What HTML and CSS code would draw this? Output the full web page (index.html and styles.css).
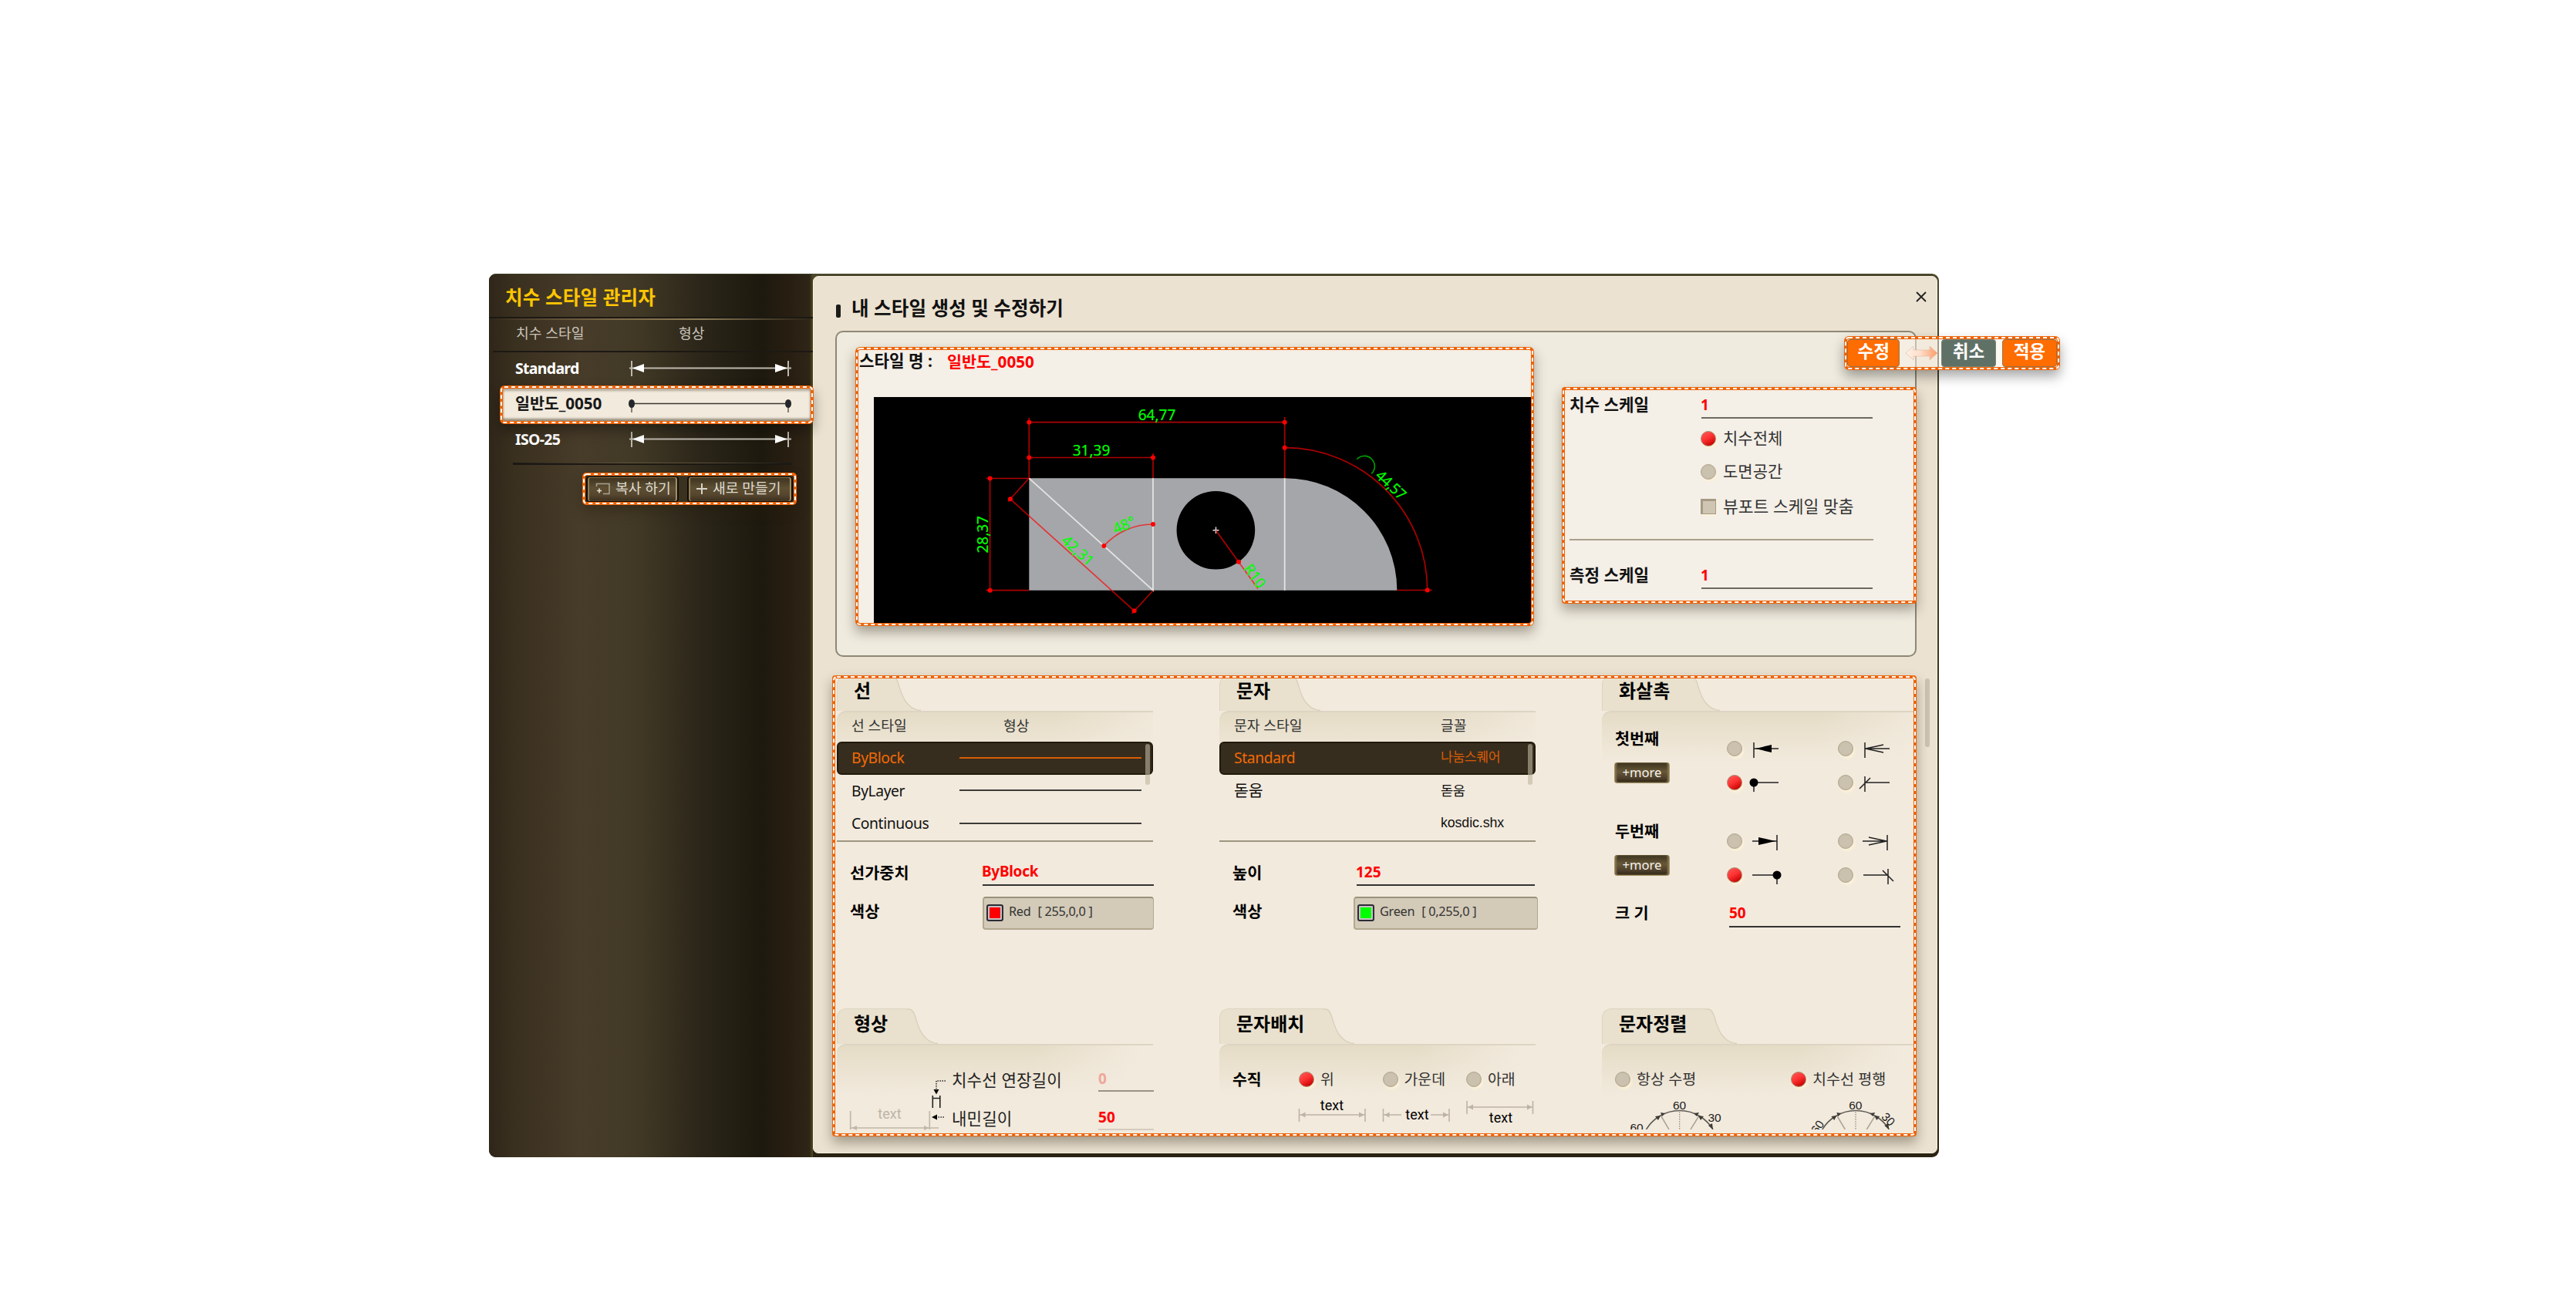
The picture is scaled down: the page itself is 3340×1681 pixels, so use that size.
FILE: index.html
```html
<!DOCTYPE html>
<html lang="ko">
<head>
<meta charset="utf-8">
<title>치수 스타일 관리자</title>
<link rel="stylesheet" href="styles.css">
</head>
<body>
<svg class="defs" width="0" height="0" aria-hidden="true">
  <defs>
    <linearGradient id="swap" x1="0" x2="1" y1="0" y2="0"><stop offset="0" stop-color="#fff0e6"/><stop offset=".45" stop-color="#ffdfcc"/><stop offset="1" stop-color="#ff9c68"/></linearGradient>
    <symbol id="dim-arrows" viewBox="0 0 212 24">
      <path d="M1 11.5H211M4 2V22M207 2V22" stroke="#bdb8ae" stroke-width="2" fill="none"/>
      <path d="M5 11.5L20 6V17ZM206 11.5L190 6V17Z" fill="#fff"/>
    </symbol>
    <symbol id="dim-dots" viewBox="0 0 212 24">
      <path d="M4 11.5H207" stroke="#3a3934" stroke-width="1.6"/>
      <path d="M4 11V23M207 11V23" stroke="#77736c" stroke-width="1.8"/>
      <ellipse cx="4" cy="11.5" rx="4" ry="5.5" fill="#23262a"/><ellipse cx="207" cy="11.5" rx="4" ry="5.5" fill="#23262a"/>
    </symbol>
    <symbol id="tab-end" viewBox="0 0 42 46">
      <path d="M0 0H6C16 3 12 22 24 36Q32 46 42 46H0Z" fill="#e9e1ce"/>
      <path d="M0 .8H5C15 3 12 22 24 36Q32 45.400 42 45.500" fill="none" stroke="#d9cfba" stroke-width="1.300"/>
    </symbol>
    <symbol id="protractor" viewBox="2110 1421 130 44">
      <path d="M2134.500 1465A50.500 50.500 0 0 1 2221 1465" fill="none" stroke="#5e5b54" stroke-width="1.600"/>
      <path d="M2154 1448L2164 1465M2202.500 1448L2192 1465" stroke="#aaa396" stroke-width="1.500"/>
      <path d="M2177.700 1442V1465" stroke="#8c877c" stroke-width="1.200" stroke-dasharray="1.500 1.500"/>
      <path d="M2153 1443L2159 1444L2155 1448ZM2146 1448L2153 1447L2150 1453ZM2203 1443L2196 1444L2200 1448ZM2209 1448L2202 1447L2205 1453ZM2221 1465L2215 1460L2220 1457Z" fill="#3d3b36"/>
    </symbol>
  </defs>
</svg>

<main class="window">
  <aside class="sidebar">
    <h1 class="sidebar-title">치수 스타일 관리자</h1>
    <div class="sidebar-head"><span>치수 스타일</span><span>형상</span></div>
    <div class="style-row"><span class="latin">Standard</span><svg class="dim"><use href="#dim-arrows"/></svg></div>
    <div class="style-row selected callout"><svg class="march"><rect/></svg><span class="sel-name">일반도_0050</span><svg class="dim"><use href="#dim-dots"/></svg></div>
    <div class="style-row"><span class="latin">ISO-25</span><svg class="dim"><use href="#dim-arrows"/></svg></div>
    <div class="sidebar-rule"></div>
    <div class="sidebar-actions callout">
      <svg class="march"><rect/></svg>
      <button class="bronze copy"><svg width="20" height="18" viewBox="0 0 20 18"><path d="M1.500 6V2.500H18V15.500H10" fill="none" stroke="#a9a294" stroke-width="1.500"/><path d="M2 11.500H8M5 8.500V14.500" stroke="#e4dfd5" stroke-width="1.600"/></svg>복사 하기</button>
      <button class="bronze create"><svg width="14" height="14" viewBox="0 0 14 14"><path d="M0 7H14M7 0V14" stroke="#d8d3c8" stroke-width="2"/></svg>새로 만들기</button>
    </div>
  </aside>

  <section class="panel">
    <header class="panel-head"><i class="bullet"></i><h2>내 스타일 생성 및 수정하기</h2>
      <svg class="close" width="14" height="14" viewBox="0 0 14 14"><path d="M1 1L13 13M13 1L1 13" stroke="#222" stroke-width="1.800"/></svg></header>

    <div class="group">
      <div class="preview callout">
        <svg class="march"><rect/></svg>
        <div class="name-row"><b>스타일 명 :</b><strong>일반도_0050</strong></div>
        <svg class="drawing" width="852" height="293" viewBox="1133 515 852 293">
          <rect x="1133" y="515" width="852" height="293" fill="#000"/>
          <path d="M1334.300 620.300H1666A145.300 145.300 0 0 1 1811.300 765.700H1334.300Z" fill="#a5a6aa"/>
          <circle cx="1576.400" cy="687.700" r="50.800" fill="#000"/>
          <path d="M1334.300 620.300L1495 765.700V620.300M1665.700 620.300V765.700" fill="none" stroke="#e4e4e4" stroke-width="1.800"/>
          <path d="M1572.500 687.700H1580.500M1576.500 683.500V692" stroke="#ddd" stroke-width="1.500"/>
          <g class="dims">
            <path d="M1334.300 542V620M1665.700 541V620M1334.300 547.700H1665.700M1334.300 593.500H1495M1495 588V620"/>
            <path d="M1283.600 620.500V765.700M1278.500 620.500H1334M1278.500 765.700H1334"/>
            <path d="M1310 647.300L1470.700 792.300M1334 620.500L1307 650.500M1495 766L1467.500 796"/>
            <path d="M1431.400 708A85.700 85.700 0 0 1 1495 680M1576.500 688L1631 763.500"/>
            <path d="M1665.700 580.700A185 185 0 0 1 1850.700 765.500M1811.300 765.500H1857"/>
          </g>
          <g fill="#f00">
            <circle cx="1334.300" cy="547.700" r="3"/><circle cx="1665.700" cy="547.700" r="3"/><circle cx="1334.300" cy="593.500" r="3"/><circle cx="1495" cy="593.500" r="3"/>
            <circle cx="1283.600" cy="620.500" r="3"/><circle cx="1283.600" cy="765.700" r="3"/><circle cx="1310" cy="647.300" r="3"/><circle cx="1470.700" cy="792.300" r="3"/>
            <circle cx="1431.400" cy="708" r="3"/><circle cx="1495" cy="680" r="3"/><circle cx="1606" cy="728.700" r="3"/><circle cx="1665.700" cy="580.700" r="3"/><circle cx="1850.700" cy="765.500" r="3"/>
          </g>
          <g class="dim-text">
            <text x="1500" y="544.700">64,77</text>
            <text x="1415" y="590.700">31,39</text>
            <text transform="translate(1281.300 693.300) rotate(-90)">28,37</text>
            <text transform="translate(1393 719) rotate(42)">42,31</text>
            <text transform="translate(1460 687) rotate(-24)">48°</text>
            <text transform="translate(1621.500 751) rotate(54)">R10</text>
            <text transform="translate(1799 634) rotate(43)" textLength="46">44,57</text>
          </g>
          <path d="M1759.300 595.700A13.300 13.300 0 1 1 1778.300 614.300" fill="none" stroke="#00a000" stroke-width="1.600"/>
        </svg>
      </div>

      <div class="scale callout">
        <svg class="march"><rect/></svg>
        <div class="scale-row"><b>치수 스케일</b><span class="value">1</span></div>
        <label class="option"><i class="radio on"></i>치수전체</label>
        <label class="option"><i class="radio"></i>도면공간</label>
        <label class="option check-row"><i class="check"></i>뷰포트 스케일 맞춤</label>
        <div class="scale-rule"></div>
        <div class="scale-row"><b>측정 스케일</b><span class="value">1</span></div>
      </div>
    </div>

    <div class="lower">
      <div class="sections callout">
        <svg class="march"><rect/></svg>
        <div class="grid">
          <article class="section">
            <h3 class="tab"><span>선</span><svg><use href="#tab-end"/></svg></h3>
            <div class="body">
              <div class="list line-list">
                <div class="list-head"><span>선 스타일</span><span>형상</span></div>
                <div class="item active"><span>ByBlock</span><i class="stroke"></i></div>
                <div class="item"><span>ByLayer</span><i class="stroke"></i></div>
                <div class="item"><span>Continuous</span><i class="stroke"></i></div>
                <i class="thumb"></i>
              </div>
              <div class="field weight"><b>선가중치</b><span class="value">ByBlock</span></div>
              <div class="field color"><b>색상</b><span class="select"><i class="swatch red"></i>Red<em>[ 255,0,0 ]</em></span></div>
            </div>
          </article>

          <article class="section">
            <h3 class="tab"><span>문자</span><svg><use href="#tab-end"/></svg></h3>
            <div class="body">
              <div class="list text-list">
                <div class="list-head"><span>문자 스타일</span><span>글꼴</span></div>
                <div class="item active"><span>Standard</span><span class="font square">나눔스퀘어</span></div>
                <div class="item"><span class="dotum">돋움</span><span class="font">돋움</span></div>
                <div class="item"><span></span><span class="font shx">kosdic.shx</span></div>
                <i class="thumb"></i>
              </div>
              <div class="field height"><b>높이</b><span class="value">125</span></div>
              <div class="field color green-field"><b>색상</b><span class="select"><i class="swatch green"></i>Green<em>[ 0,255,0 ]</em></span></div>
            </div>
          </article>

          <article class="section wide">
            <h3 class="tab"><span>화살촉</span><svg><use href="#tab-end"/></svg></h3>
            <div class="body arrows">
              <div class="arrow-set">
                <div class="arrow-name"><b>첫번째</b><button class="more">+more</button></div>
                <div class="arrow-options">
                  <label><i class="radio"></i><svg width="44" height="24" viewBox="0 0 44 24"><path d="M8 4V24M8 12H40"/><path class="solid" d="M10 12L31 7V17Z"/></svg></label>
                  <label><i class="radio"></i><svg width="44" height="24" viewBox="0 0 44 24"><path d="M8 4V24M8 12H40M32 7L9 12L32 17"/></svg></label>
                  <label><i class="radio on"></i><svg width="44" height="24" viewBox="0 0 44 24"><path d="M8 12V24M8 12H40"/><circle cx="8" cy="12" r="5.500"/></svg></label>
                  <label><i class="radio"></i><svg width="44" height="24" viewBox="0 0 44 24"><path d="M8 4V24M8 12H40M1 20L15 6"/></svg></label>
                </div>
              </div>
              <div class="arrow-set second">
                <div class="arrow-name"><b>두번째</b><button class="more">+more</button></div>
                <div class="arrow-options">
                  <label><i class="radio"></i><svg width="44" height="24" viewBox="0 0 44 24"><path d="M38 4V24M6 12H38"/><path class="solid" d="M36 12L14 7V17Z"/></svg></label>
                  <label><i class="radio"></i><svg width="44" height="24" viewBox="0 0 44 24"><path d="M37 4V24M5 12H37M13 7L36 12L13 17"/></svg></label>
                  <label><i class="radio on"></i><svg width="44" height="24" viewBox="0 0 44 24"><path d="M38 12V24M6 12H38"/><circle cx="38" cy="12" r="5.500"/></svg></label>
                  <label><i class="radio"></i><svg width="48" height="24" viewBox="0 0 48 24"><path d="M38 4V24M6 12H38M31 6L45 20"/></svg></label>
                </div>
              </div>
              <div class="field size"><b>크 기</b><span class="value">50</span></div>
            </div>
          </article>

          <article class="section">
            <h3 class="tab"><span>형상</span><svg><use href="#tab-end"/></svg></h3>
            <div class="body shape">
              <svg class="shape-art" width="150" height="88" viewBox="1085 1381 150 88">
                <g stroke="#c1b8a9" stroke-width="1.700" fill="none"><path d="M1102.700 1441V1465M1205.300 1441V1465M1103 1463H1217"/></g>
                <path d="M1104 1463L1111 1460V1466ZM1205 1463L1198 1460V1466Z" fill="#c1b8a9"/>
                <text x="1153.500" y="1451" class="art-text" fill="#bdb4a6">text</text>
                <path d="M1226 1402H1214V1412M1224 1449H1215" fill="none" stroke="#333" stroke-width="1.600" stroke-dasharray="1.600 1.400"/>
                <path d="M1210.500 1413H1217.500L1214 1419.500ZM1208 1449L1215 1445.500V1452.500Z" fill="#000"/>
                <path d="M1209.300 1421V1437M1218.800 1421V1437M1209 1424.500H1219" fill="none" stroke="#222" stroke-width="1.600"/>
              </svg>
              <span>치수선 연장길이</span><span class="value faded">0</span>
              <span>내민길이</span><span class="value light-rule">50</span>
            </div>
          </article>

          <article class="section">
            <h3 class="tab"><span>문자배치</span><svg><use href="#tab-end"/></svg></h3>
            <div class="body">
              <div class="place-row"><b>수직</b><label><i class="radio on"></i>위</label><label><i class="radio"></i>가운데</label><label><i class="radio"></i>아래</label></div>
              <svg class="place-art" width="410" height="48" viewBox="1581 1421 410 48">
                <path d="M1684.500 1438V1455M1770 1438V1455M1685 1446H1770M1793.500 1438V1455M1879 1438V1455M1794 1446H1817M1855 1446H1879M1902 1428V1445M1987.500 1428V1445M1902 1436H1987" fill="none" stroke="#bdb4a6" stroke-width="1.600"/>
                <path d="M1686 1446L1692.500 1442.500V1449.500ZM1769 1446L1762 1442.500V1449.500ZM1795 1446L1801.500 1442.500V1449.500ZM1878 1446L1871 1442.500V1449.500ZM1903.500 1436L1910 1432.500V1439.500ZM1986.500 1436L1980 1432.500V1439.500Z" fill="#bdb4a6"/>
                <g class="art-text"><text x="1727" y="1440">text</text><text x="1837.500" y="1451.500">text</text><text x="1946" y="1455.500">text</text></g>
              </svg>
            </div>
          </article>

          <article class="section wide">
            <h3 class="tab"><span>문자정렬</span><svg><use href="#tab-end"/></svg></h3>
            <div class="body">
              <div class="align-row"><label><i class="radio"></i>항상 수평</label><label><i class="radio on"></i>치수선 평행</label></div>
              <svg class="align-art" width="404" height="44" viewBox="2077 1421 404 44">
                <use href="#protractor" x="2110" y="1421" width="130" height="44"/>
                <use href="#protractor" x="2338.300" y="1421" width="130" height="44"/>
                <g class="angle-text">
                  <text x="2177.500" y="1438.500">60</text><text x="2223" y="1454.500">30</text><text x="2122" y="1468">60</text>
                  <text x="2405.800" y="1438.500">60</text><text transform="translate(2444.500 1455.500) rotate(45)">30</text><text transform="translate(2361 1465) rotate(-55)">60</text>
                </g>
              </svg>
            </div>
          </article>
        </div>
      </div>
      <i class="page-thumb"></i>
    </div>
  </section>

  <div class="edit-bar callout">
    <svg class="march"><rect/></svg>
    <button class="chip orange">수정</button>
    <svg class="swap" width="43" height="20" viewBox="0 0 43 20"><path d="M1 10L11 1V6H32V1L42 10L32 19V14H11V19Z" fill="url(#swap)" stroke="#d9b49c" stroke-width=".8" stroke-dasharray="1.500 1"/></svg>
    <button class="chip slate">취소</button>
    <button class="chip orange last">적용</button>
  </div>
</main>
</body>
</html>
```
FILE: styles.css
```css
* { box-sizing: border-box; }
body {
  margin: 0;
  width: 3340px;
  height: 1681px;
  overflow: hidden;
  background: #fff;
  color: #111;
  font-family: "Noto Sans", "Noto Sans CJK KR", sans-serif;
  font-size: 21px;
  line-height: 1.3;
}
h1, h2, h3 { margin: 0; font-weight: 700; }
i, em { font-style: normal; display: inline-block; }
b, strong { font-weight: 700; }
button { border: 0; padding: 0; font: inherit; }
svg { display: block; flex: none; }
.defs { position: absolute; }
span, b, strong, h1, h2, h3, label, button { white-space: nowrap; }

.window {
  position: relative;
  display: flex;
  width: 1880px;
  height: 1146px;
  margin: 355px 0 0 634px;
  border-radius: 9px;
  background: linear-gradient(#4b472c, #3a351b 50%, #2b2312);
}

/* dashed orange frame drawn around highlighted areas */
.callout {
  position: relative;
  border: 4px solid #ee6205;
  border-radius: 6px;
  box-shadow: 0 8px 16px rgba(40, 30, 10, .38);
}
.march { position: absolute; left: -4px; top: -4px; width: calc(100% + 8px); height: calc(100% + 8px); z-index: 3; pointer-events: none; }
.march rect { x: 2px; y: 2px; width: calc(100% - 4px); height: calc(100% - 4px); rx: 4px; fill: none; stroke: #fff; stroke-width: 2px; stroke-dasharray: 5 4; }

/* sidebar */
.sidebar {
  width: 420px;
  height: 1146px;
  border-radius: 9px 0 0 9px;
  border-top: 1px solid #3c3c24;
  background: linear-gradient(90deg, #2f261a 0, #3a301f 8%, #473b29 28%, #443a28 40%, #3f3724 48%, #2c261a 65%, #221e12 77%, #1d190e 84%, #291e12 93%, #2e2617 99%, #544d1e 100%);
}
.sidebar-title { height: 57px; padding: 15px 0 0 21px; font-size: 24.500px; line-height: 29px; letter-spacing: .2px; color: #ffc600; border-bottom: 2px solid #1c1914; }
.sidebar-head {
  display: grid; grid-template-columns: 211px auto; align-items: center;
  height: 44px; margin-left: 5px; padding: 0 0 2px 30px;
  font-size: 18.200px; color: #c9c4ba;
  border-bottom: 2px solid #1c1914;
  background: linear-gradient(90deg, transparent, #806a48 40%, #8a7954 65%, transparent) 0 0 / 100% 2px no-repeat;
}
.style-row { display: flex; align-items: center; height: 43px; padding: 0 0 1px 34px; color: #fff; font-weight: 700; }
.style-row span { width: 147px; }
.style-row .latin { font-size: 19.500px; letter-spacing: -.7px; }
.dim { width: 212px; height: 24px; }
.style-row.selected {
  width: 407px; height: 50px; margin-left: 14px; padding-left: 16px; padding-bottom: 3px;
  background: #f2eadd; color: #191919; z-index: 2;
  box-shadow: inset 0 3px 3px rgba(90, 80, 60, .4), inset 0 -3px 3px rgba(90, 80, 60, .6), 0 8px 16px rgba(0, 0, 0, .35);
}
.sel-name { font-size: 20.700px; letter-spacing: -.1px; }
.style-row.selected + .style-row { height: 50px; padding-bottom: 10px; }
.sidebar-rule { width: 361px; height: 3px; margin-left: 31px; background: linear-gradient(90deg, transparent, #67573b 40%, #5d5035 70%, transparent) 0 0 / 100% 1px no-repeat, #1b1814; }
.sidebar-actions { display: flex; gap: 11px; width: 278px; height: 42px; margin: 10px 0 0 121px; padding: 1px; background: #3a311f; border-radius: 5px; }
.bronze {
  display: flex; align-items: center; height: 33px; width: 120px; padding: 0 0 2px 10px; gap: 6px;
  font-size: 18.200px; color: #dfdbd2; border-radius: 4px;
  background: linear-gradient(#3d3220, #5d4f32 45%, #55452e 75%, #3b2f1f);
  border: 1px solid #110d07; border-width: 1px 2px;
  box-shadow: inset 2px 0 1px #8d7d57, inset -2px 0 1px #a3926a, inset 0 1px 0 #80683f;
}
.bronze.create { width: 137px; padding-left: 10px; gap: 7px; }

/* main panel */
.panel {
  width: 1458px; height: 1138px; margin-top: 3px;
  border-radius: 7px; border: 1px solid #f7f0e0;
  background: #ebe2d1;
}
.panel-head { display: flex; align-items: center; height: 70px; padding: 12px 0 0 29px; }
.bullet { width: 6px; height: 17px; border-radius: 2px; background: #1b1b1b; margin-top: 6px; }
.panel-head h2 { margin-left: 14px; font-size: 24.500px; width: 1380px; letter-spacing: .1px; }
.close { margin-top: -31px; }
.group {
  display: flex; width: 1402px; height: 423px; margin-left: 28px;
  border: 2px solid #8f8775; border-radius: 10px; background: #efebdf;
}
.preview { width: 880px; height: 362px; margin: 19px 0 0 24px; background: #f4efe7; }
.name-row { display: flex; height: 61px; padding-left: 1px; line-height: 28px; font-size: 21.200px; }
.name-row b { width: 114px; }
.name-row strong { color: #f00; font-size: 20.700px; line-height: 30px; }
.drawing { margin-left: 20px; border-radius: 0 0 3px 0; }
.dims path { fill: none; stroke: #f00; stroke-opacity: .68; stroke-width: 1.700; }
.dim-text { fill: #0f0; font: 19px "Noto Sans", sans-serif; text-anchor: middle; stroke: #0f0; stroke-width: .2px; }

.scale { flex: none; width: 460px; height: 281px; margin: 71px 0 0 36px; padding: 3px 0 0 6px; background: #f4efe7; border-radius: 4px; }
.scale-row { display: grid; grid-template-columns: 171px 222px; height: 34px; line-height: 32px; font-size: 21.200px; }
.value { color: #f00; font-weight: 700; font-size: 19px; border-bottom: 2px solid #333; }
.scale .value { border-color: #6b6960; text-indent: -1px; }
.option { display: flex; align-items: center; height: 30px; margin: 11px 0 0 170px; font-size: 21px; gap: 9px; color: #333; }
.option + .option { margin-top: 13px; }
.option.check-row { margin-top: 15px; gap: 9px; font-size: 21.500px; }
.radio {
  flex: none; width: 20px; height: 20px; border-radius: 50%;
  background: radial-gradient(#cbc1af 55%, #bfb49f); border: 1.500px solid #b0a58c;
  box-shadow: 2px 3px 3px #fcf1d8;
}
.radio.on { background: linear-gradient(150deg, #ff4e4e 15%, #f33 45%, #c40000 90%); border-color: #a98a6c; }
.check { width: 20px; height: 20px; background: #cfc5b3; border: 1px solid #a59a84; border-width: 3px 1px 1px 3px; box-shadow: 1px 2px 2px #fcf1d8; }
.scale-rule { width: 394px; height: 2px; margin: 27px 0 29px; background: #a99f8b; }

.lower { display: flex; margin: 24px 0 0 24px; }
.sections { width: 1406px; height: 598px; background: #f2eadd; border-radius: 4px; }
.page-thumb { width: 6px; height: 89px; margin: 4px 0 0 11px; border-radius: 3px; background: #cbc3b1; }
.grid { display: grid; grid-template: 428px 162px / 410px 410px 404px; column-gap: 86px; margin-left: 2px; height: 590px; overflow: hidden; }
.section { display: flex; flex-direction: column; min-height: 0; }
.section:nth-child(-n+3) { margin-top: -4px; }
.tab { display: flex; height: 46px; flex: none; }
.tab span { height: 46px; padding: 0 23px 0 21px; line-height: 37px; font-size: 24px; color: #000; background: #e9e1ce; border-radius: 12px 0 0 0; border: 1px solid #ddd4bf; border-width: 1px 0 0 1px; }
.tab svg { width: 42px; height: 46px; }
.body {
  flex: 1; border-top: 2px solid #ddd4c3; border-radius: 12px 0 0 0;
  background: linear-gradient(rgba(242, 234, 221, 0), #f2eadd 66px), linear-gradient(100deg, #e5dcc6 60%, #f2eadd 92%);
}
.list { position: relative; border-bottom: 2px solid #9e9580; }
.list-head, .item { display: grid; align-items: center; padding: 0 0 2px 19px; }
.line-list > div { grid-template-columns: 140px auto; }
.line-list .list-head { grid-template-columns: 197px auto; }
.text-list > div, .text-list .list-head { grid-template-columns: 268px auto; }
.list-head { height: 38px; font-size: 18.200px; color: #333; }
.item { height: 42.500px; font-size: 19.300px; letter-spacing: -.4px; }
.item.active { height: 43px; padding-left: 17px; background: #372d1e; border: 2px solid #211a0a; border-radius: 6px; color: #f26a05; }
.stroke { width: 236px; height: 2px; background: #3d3b37; }
.active .stroke { background: #d95c05; }
.active .font { color: #d95c05; }
.font { font-size: 17.500px; }
.font.square { font-size: 17.200px; }
.font.shx { font: 17.800px "Liberation Sans", sans-serif; letter-spacing: -.1px; }
.dotum { font-size: 20.500px; letter-spacing: 0; }
.thumb { position: absolute; right: 4px; top: 41px; width: 6px; height: 53px; border-radius: 3px; background: rgba(190, 180, 160, .6); }
.field { display: grid; grid-template-columns: 172px auto; padding-left: 17px; }
.field b { font-size: 20.800px; color: #000; }
.weight, .height { height: 32px; margin-top: 25px; line-height: 30px; }
.weight .value { width: 222px; letter-spacing: -.3px; line-height: 26px; text-indent: -1px; }
.height { grid-template-columns: 161px 231px; }
.height .value { line-height: 29px; text-indent: -1px; }
.color { margin-top: 14px; line-height: 38px; }
.select {
  display: flex; width: 222px; height: 43px; padding-left: 3px; line-height: 35px;
  background: #d3cab8; border: 2px solid #b2a890; border-width: 2px 1px 2px 2px; border-top-color: #9b917b; border-radius: 4px; font-size: 16.300px; color: #333; letter-spacing: -.3px;
}
.green-field { grid-template-columns: 157px auto; }
.green-field .select { width: 239px; }
.select em { margin-left: 9px; }
.swatch { width: 22px; height: 22px; margin: 8px 7px 0 0; border: 2px solid #2c2c34; border-radius: 3px; box-shadow: inset 0 0 0 2px #c9c1c5; }
.red { background: #f00; }
.green { background: #0f0; }

.arrows { padding: 19px 0 0 17px; }
.arrow-set { display: flex; height: 120px; }
.arrow-name { display: flex; flex: none; flex-direction: column; width: 145px; }
.arrow-name b { font-size: 20.700px; line-height: 30px; color: #000; }
.more {
  width: 72px; height: 27px; margin: 16px 0 0 -1px; font-size: 16.600px; line-height: 24px; color: #f5f2ec; border-radius: 4px;
  background: linear-gradient(#3c321d, #665738 45%, #4b3d2a 80%, #2c2312);
  border: 1px solid #a59468; border-width: 0 1px 1px;
  box-shadow: inset 2px 0 2px #85754f, inset -2px 0 2px #85754f;
}
.arrow-options { display: grid; flex: none; grid-template: 44px 44px / 143.500px 143.500px; padding-top: 6px; }
.arrow-options label { display: flex; align-items: center; gap: 7px; }
.arrow-options path { fill: none; stroke: #222; stroke-width: 1.500; }
.arrow-options .solid, .arrow-options circle { fill: #000; stroke: none; }
.arrow-options svg { margin-left: 0; }
.field.size { grid-template-columns: 148px 222px; height: 33px; margin-top: -16px; padding: 0; line-height: 34px; }

.shape { display: grid; grid-template-columns: 149px 190px 72px; grid-template-rows: 40px 10px 40px; padding-top: 25px; align-items: center; font-size: 21.200px; letter-spacing: .1px; color: #222; }
.shape-art { grid-area: 1 / 1 / 4 / 2; align-self: start; }
.shape > span:nth-of-type(3), .shape > span:nth-of-type(4) { grid-row: 3; }
.shape .value { height: 35px; align-self: start; line-height: 36px; border-color: #9a9284; }
.shape .faded { color: #efa69b; }
.shape .light-rule { border-color: #d5ccbe; }
.art-text { font-family: Roboto, sans-serif; font-size: 18px; letter-spacing: 0; text-anchor: middle; }
.place-row { display: flex; align-items: center; height: 65px; padding: 24px 0 1px 17px; font-size: 19.400px; color: #333; }
.place-row b { flex: none; width: 86px; font-size: 20.500px; color: #000; }
.place-row label, .align-row label { display: flex; flex: none; align-items: center; gap: 8px; }
.place-row label { width: 108.500px; }
.align-row { display: flex; height: 65px; padding: 24px 0 1px 17px; font-size: 19.600px; color: #333; }
.align-row label { width: 228px; gap: 8px; }
.angle-text { font: 15.500px "Liberation Sans", sans-serif; text-anchor: middle; fill: #222; }

/* floating edit / cancel / apply bar */
.edit-bar { position: absolute; left: 1757px; top: 81px; display: flex; align-items: center; width: 280px; height: 44px; background: rgba(250, 242, 232, .5); box-shadow: 0 8px 16px rgba(0, 0, 0, .35); }
.chip { height: 36px; border-radius: 4px; color: #fff; font-size: 22.500px; line-height: 30px; font-weight: 700; padding-bottom: 5px; border: 1px solid #9a7348; }
.chip.orange { width: 69px; background: #ff6c00; }
.chip.slate { width: 71px; margin-left: 4px; background: #5f7167; border-color: #7c8377; }
.chip.last { width: 72px; margin-left: 8px; }
.swap { margin-left: 7px; }
```
